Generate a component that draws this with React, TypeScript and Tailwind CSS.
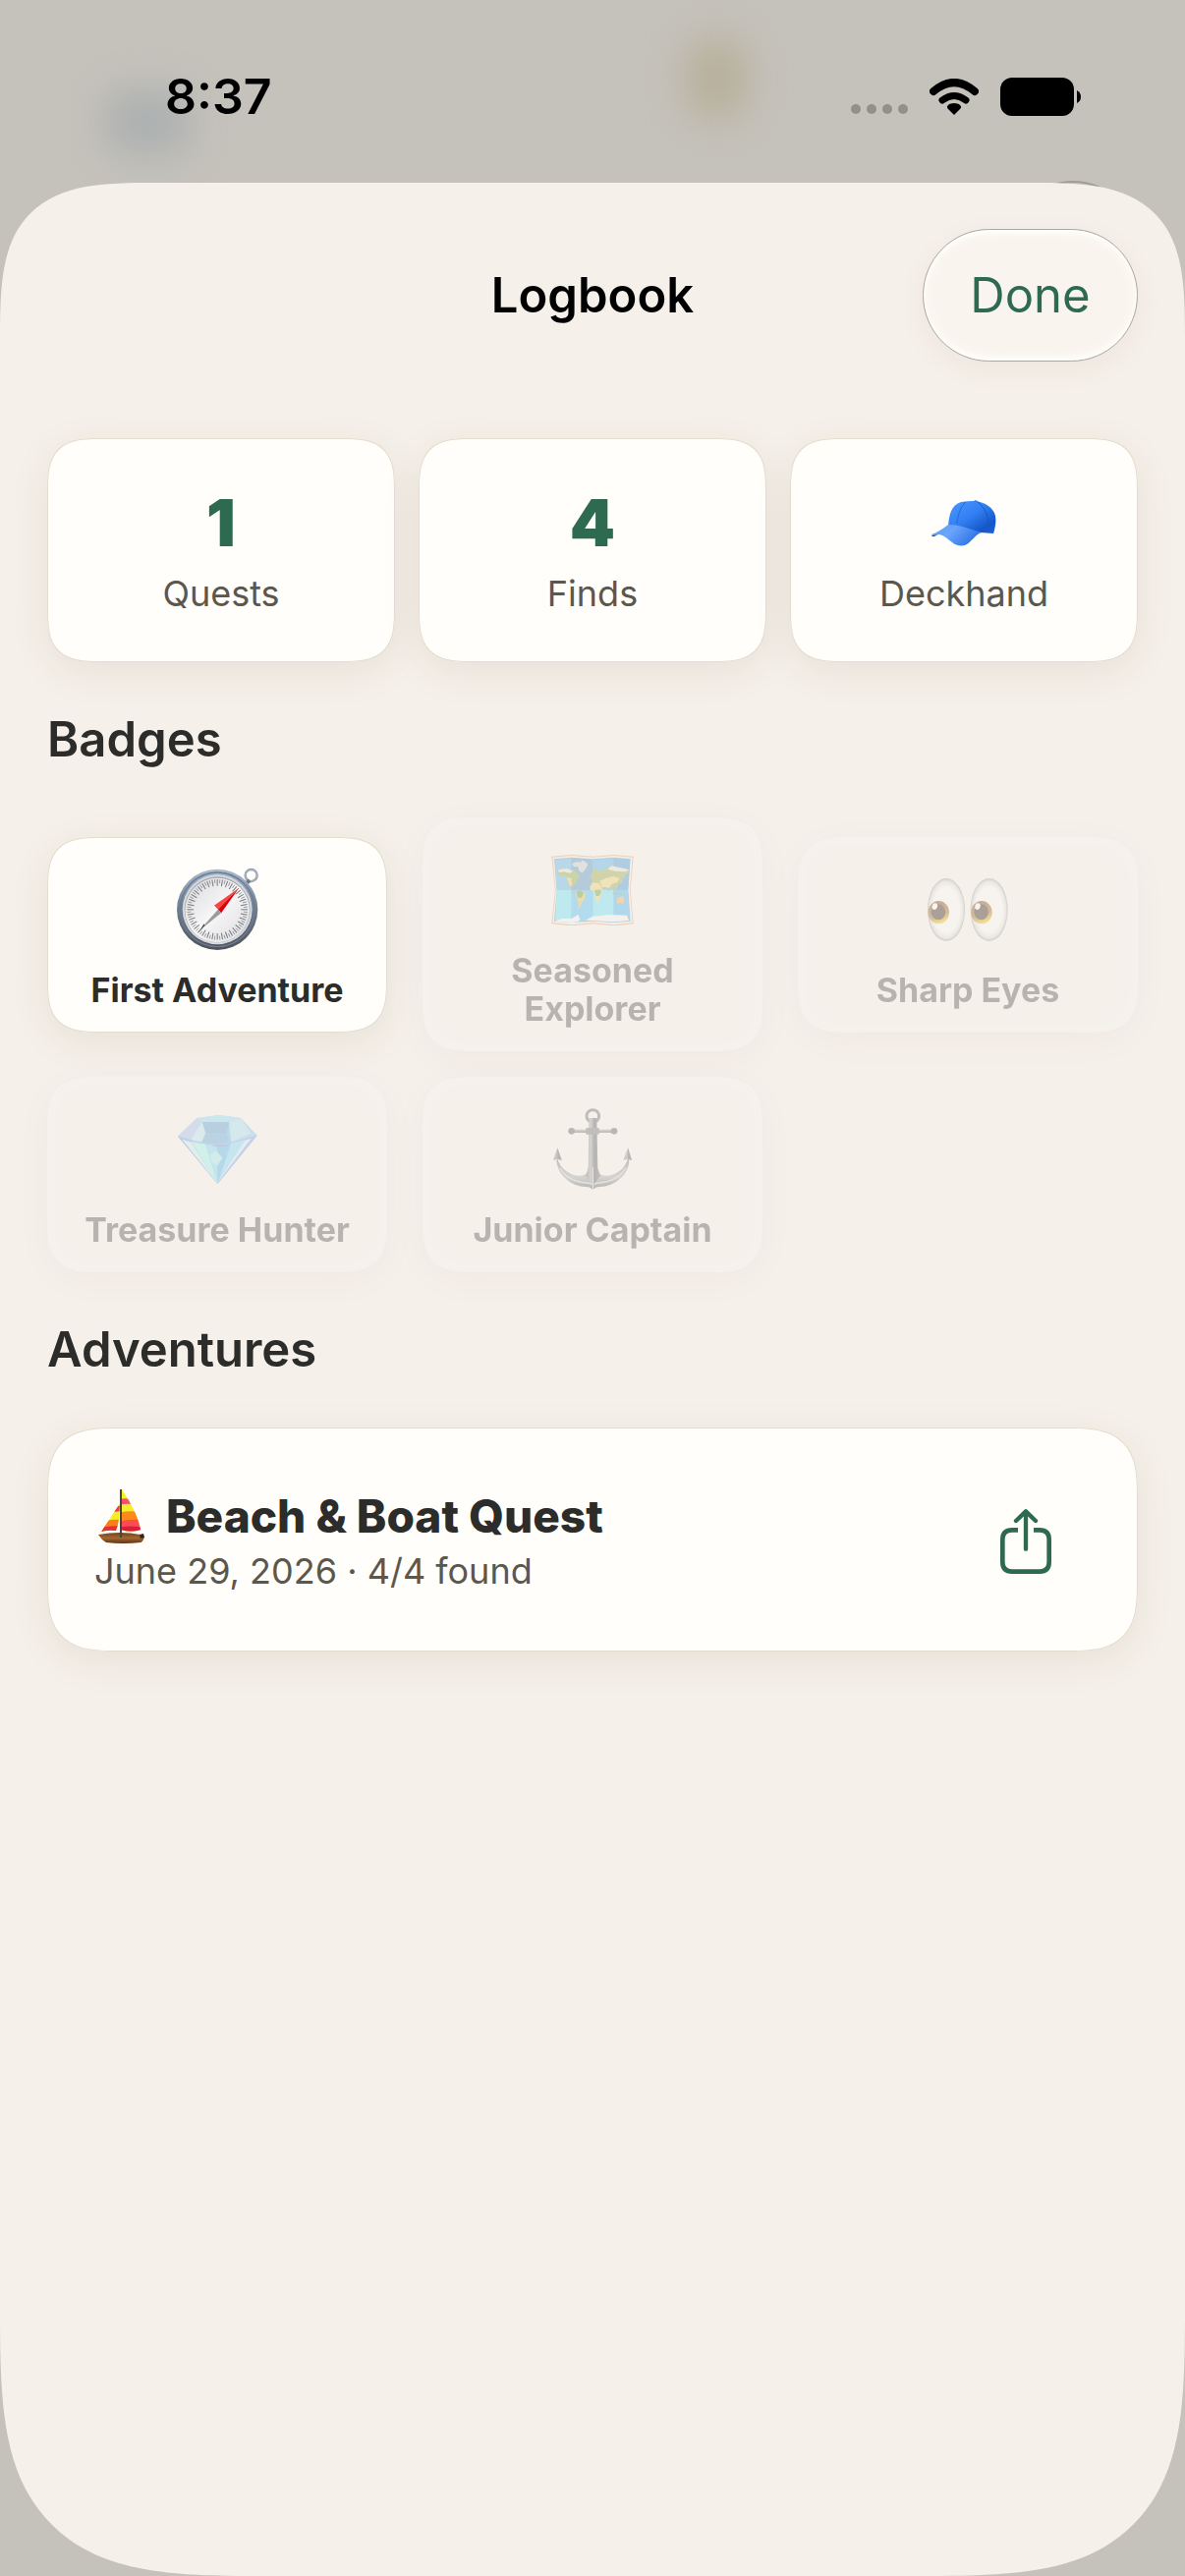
import { ReactNode } from 'react';

interface Badge {
  name: string;
  icon: ReactNode;
  earned: boolean;
}

const CapIcon = () => (
  <svg viewBox="0 0 66 47" className="w-[66px]" aria-hidden="true">
    <defs>
      <linearGradient id="capCrown" x1="0" y1="0" x2="1" y2="1">
        <stop offset="0" stopColor="#4a98ff" />
        <stop offset="0.45" stopColor="#3380f4" />
        <stop offset="0.8" stopColor="#1457c8" />
        <stop offset="1" stopColor="#1c62d8" />
      </linearGradient>
      <linearGradient id="capBrim" x1="0" y1="0" x2="1" y2="0.4">
        <stop offset="0" stopColor="#5a9bff" />
        <stop offset="0.45" stopColor="#6aa5fb" />
        <stop offset="1" stopColor="#2f74e6" />
      </linearGradient>
    </defs>
    <path d="M0 36c1 2 4 1 6-1l2-2z" fill="#154796" />
    <path d="M17 26C18 15 20 5 30 2c5-1 9-1 14-1 11 1 19 7 21 15 1 6 0 12-2 18l-13-1z" fill="url(#capCrown)" />
    <path d="M43 1c1-1 4-1 4 1z" fill="#2a6fe0" />
    <path d="M26 24c1-9 3-17 9-22" fill="none" stroke="#2468d6" strokeWidth="1" />
    <path d="M47 2c9 7 12 17 11 30" fill="none" stroke="#1a58c0" strokeWidth="1" />
    <path d="M0 35C6 33 12 29 17 25c12 0 20 4 34 8-7 2-10 10-17 13-5 1-10 0-13-3-4-3-8-7-13-8-3 0-6 2-8 0z" fill="url(#capBrim)" />
  </svg>
);

const CompassIcon = () => (
  <svg viewBox="0 0 248 252" className="w-[83px]" aria-hidden="true">
    <defs>
      <linearGradient id="compassRim" x1="0" y1="0" x2="0" y2="1">
        <stop offset="0" stopColor="#a9bdd2" />
        <stop offset="0.4" stopColor="#76859a" />
        <stop offset="1" stopColor="#4c525b" />
      </linearGradient>
      <linearGradient id="compassFace" x1="0" y1="0" x2="1" y2="1">
        <stop offset="0" stopColor="#d9d9dc" />
        <stop offset="0.5" stopColor="#f6f6f8" />
        <stop offset="1" stopColor="#dcdcdf" />
      </linearGradient>
    </defs>
    <circle cx="226" cy="24" r="18" fill="none" stroke="#8a98a9" strokeWidth="7" />
    <circle cx="226" cy="24" r="18" fill="none" stroke="#c3ccd6" strokeWidth="2" />
    <path d="M205 46l12-12 8 10-10 8z" fill="#6d7886" />
    <circle cx="123" cy="128" r="123" fill="url(#compassRim)" />
    <circle cx="123" cy="128" r="113" fill="none" stroke="#6e7c8f" strokeWidth="4" />
    <circle cx="123" cy="128" r="106" fill="#d6dade" />
    <circle cx="123" cy="128" r="100" fill="#a9a9ab" />
    <circle cx="123" cy="130" r="98" fill="url(#compassFace)" />
    {Array.from({ length: 72 }, (_, i) => (
      <line
        key={i}
        x1="123"
        y1="36"
        x2="123"
        y2={i % 2 ? 48 : 56}
        stroke="#77797d"
        strokeWidth={i % 2 ? 2 : 3}
        transform={`rotate(${i * 5} 123 128)`}
      />
    ))}
    <path d="M189 62L113 116l12 12z" fill="#ff4340" />
    <path d="M189 62l-64 66 10 10z" fill="#dc0009" />
    <path d="M68 192l45-76 12 12z" fill="#f7f7f7" />
    <path d="M68 192l57-64 10 10z" fill="#9b9b99" />
    <path d="M68 196l14-25 3 5z" fill="#4c4c4c" />
  </svg>
);

const MapIcon = () => (
  <svg viewBox="0 0 252 217" className="w-[84px]" aria-hidden="true">
    <path d="M1 5l61-5 65 5 64-5 60 5-9 103 9 103-60 6-64-6-65 6-61-6 11-103z" fill="#e0a070" />
    <path d="M4 8l58-5 65 5 64-5 57 5-8 100 8 100-57 6-64-6-65 6-58-6 10-100z" fill="#f5ebe2" />
    <path d="M9 13l53-5 65 5 64-5 51 5-7 95 7 95-51 4-64-4-65 4-53-4 8-95z" fill="#4fa0d8" />
    <path d="M12 15l50-4v97H17z" fill="#5fb2e6" />
    <path d="M62 11l65 4v93H62z" fill="#5796c4" />
    <path d="M127 15l64-4v97h-64z" fill="#54b0ea" />
    <path d="M191 11l49 5-6 92h-43z" fill="#4a9bd2" />
    <path d="M17 108h45v98l-50-4z" fill="#6edff7" />
    <path d="M62 108h65v93l-65 5z" fill="#50bcf2" />
    <path d="M127 108h64v97l-64-4z" fill="#6edff7" />
    <path d="M191 108h43l6 93-49 4z" fill="#4cb4f0" />
    <path d="M20 49l10-6 18 3 20 0 14 12 6 8-8 10-4 12-8 6-8 6 8 12 8 7-12-8-8-14-7-18-4-14-24-4z" fill="#8fa84a" />
    <path d="M46 68l16 4 2 20-6 6-6-14z" fill="#e8c660" />
    <path d="M22 46l26-4 18 8-8 6-20-4-15 3z" fill="#dfe0da" />
    <path d="M64 28l12-6 32 2 3 7-7 14-10 11-10-9-2-10-14-1z" fill="#c5cfd0" />
    <path d="M77 113l12-5 15 9-2 18-10 14-6 12-4 7 1-22-7-20z" fill="#e3c04c" />
    <path d="M77 113l12-5 10 9-6 14-12 0z" fill="#5b9a3c" />
    <path d="M119 64l8-14 10-8 12 8 20-8 12-8 20 4 36 8 1 10-10 2-4 14-8-2 2 14-12 3-4 14-6 10-6-12-9 2-6 13-6-14-12 4-7-10-10-8-14 2z" fill="#9cab4c" />
    <path d="M148 80l18-8 24-6 18 6-6 12-18 6-8 12-12-4-10 2z" fill="#ead174" />
    <path d="M172 44l12-10 20 4 34 8-12 6-30-2z" fill="#dfe0da" />
    <path d="M118 98l8-13 20 2 10 20 3 4-8 12-4 18-8 5-5-18-4-17-11-3z" fill="#edcf70" />
    <path d="M132 108l18-2 4 8-8 12h-10z" fill="#6da13f" />
    <path d="M186 114l10 3 8 6-12-3zM210 118l10 5-6 1z" fill="#6da13f" />
    <path d="M200 136l10-8 8-2 6 13-6 11-8-4-9 3z" fill="#f0a850" />
    <path d="M12 203l20-8 30 0 20-12 6 14-6 8-20 2zM105 200l22-12 30-2 14-3 60 2 6 16-46 4-64-4z" fill="#f4f2ee" />
    <path d="M90 18l8 1 8 4-10 2z" fill="#d7d9d6" />
  </svg>
);

const EyesIcon = () => (
  <svg viewBox="0 0 246 192" className="w-[82px]" aria-hidden="true">
    <defs>
      <radialGradient id="eyeWhite">
        <stop offset="0.7" stopColor="#fbfcf9" />
        <stop offset="0.9" stopColor="#dddeda" />
        <stop offset="1" stopColor="#9b9c99" />
      </radialGradient>
      <linearGradient id="eyeIris" x1="0.3" y1="0" x2="0.6" y2="1">
        <stop offset="0" stopColor="#80461c" />
        <stop offset="0.6" stopColor="#a86a22" />
        <stop offset="1" stopColor="#f4d21c" />
      </linearGradient>
    </defs>
    {[0, 131].map((x) => (
      <g key={x} transform={`translate(${x} 0)`}>
        <ellipse cx="57" cy="96" rx="57" ry="96" fill="url(#eyeWhite)" />
        <ellipse cx="34" cy="104" rx="32" ry="35" fill="url(#eyeIris)" />
        <ellipse cx="33" cy="103" rx="22" ry="24" fill="#3c2a1c" />
        <ellipse cx="22" cy="86" rx="8" ry="10" fill="#fff" transform="rotate(20 22 86)" />
      </g>
    ))}
  </svg>
);

const GemIcon = () => (
  <svg viewBox="0 0 242 209" className="w-[81px]" aria-hidden="true">
    <path d="M0 64L58 9l69-9 64 9 50 53-120 147z" fill="#62bcee" />
    <path d="M0 64L58 9l16 12-5 59z" fill="#a4bff0" />
    <path d="M58 9l69-9 64 9-35 12H74z" fill="#8edcf4" />
    <path d="M191 9l50 53-79 21-6-62z" fill="#8cc8ee" />
    <path d="M156 21l35-12 30 46-59 28z" fill="#a6e0f0" />
    <path d="M74 21h82l-8 34H84z" fill="#5f9fd0" />
    <path d="M84 55h64l8 29-36 6-48-7z" fill="#62a8da" />
    <path d="M74 21l10 34-12 28-32-8z" fill="#b6e2f2" />
    <path d="M0 64q60 22 72 19l49 126z" fill="#6a92dc" />
    <path d="M12 73l28 9 81 126z" fill="#c6ecf4" />
    <path d="M40 80l44 8 37 121z" fill="#9cf0ec" />
    <path d="M84 88l36 6 1 115z" fill="#7ed4ee" />
    <path d="M120 94l42-9-41 124z" fill="#56b6ee" />
    <path d="M162 85l48-12-89 136z" fill="#84d6f4" />
    <path d="M210 73l31-11-120 147z" fill="#7c9fe6" />
    <path d="M204 78l20-8-102 134z" fill="#d0e4f6" />
    <path d="M96 120l22-10 18 20-16 24-16-10z" fill="#a2e4ee" />
    <path d="M2 66q60 22 110 22t127-26" fill="none" stroke="#88a8ea" strokeWidth="3" />
    <path d="M108 93h42" stroke="#668fc0" strokeWidth="4" />
  </svg>
);

const AnchorIcon = () => (
  <svg viewBox="0 0 240 251" className="w-[80px]" aria-hidden="true">
    <defs>
      <linearGradient id="anchorShaft">
        <stop offset="0" stopColor="#6f7171" />
        <stop offset="0.35" stopColor="#a9abaa" />
        <stop offset="0.6" stopColor="#585a5b" />
        <stop offset="1" stopColor="#777979" />
      </linearGradient>
      <linearGradient id="anchorArm" x1="0" y1="0" x2="0" y2="1">
        <stop offset="0" stopColor="#747676" />
        <stop offset="0.6" stopColor="#a9abaa" />
        <stop offset="1" stopColor="#585a5b" />
      </linearGradient>
    </defs>
    <circle cx="121" cy="24" r="19" fill="none" stroke="#6f7171" strokeWidth="9" />
    <path d="M12 152c8 32 40 54 68 54 20 0 26-8 28-24h26c2 16 8 24 28 24 28 0 60-22 66-54l4 8c-2 46-46 80-90 80-9 0-15 3-21 9-6-6-12-9-21-9-44 0-86-34-90-80z" fill="url(#anchorArm)" />
    <path d="M20 182c18 34 54 44 84 46 8 0 12 2 17 5 5-3 9-5 17-5 34-2 66-16 84-46" fill="none" stroke="#d0d1ce" strokeWidth="4" />
    <path d="M109 30h24l3 152 8 24-23 30-22-30 8-24z" fill="url(#anchorShaft)" />
    <path d="M121 180v69" stroke="#dedfdd" strokeWidth="3" />
    <path d="M56 70h130" stroke="#7b7d7d" strokeWidth="10" />
    <path d="M64 68h115" stroke="#a3a5a4" strokeWidth="3" />
    <circle cx="56" cy="70" r="10" fill="#626464" />
    <circle cx="186" cy="70" r="10" fill="#626464" />
    <rect x="99" y="60" width="42" height="20" rx="5" fill="#747676" />
    <path d="M13 121L0 159l13-4 13 4z" fill="#8b8d8c" />
    <path d="M13 121v34l13 4z" fill="#626464" />
    <path d="M228 121l-14 38 14-4 12 4z" fill="#989a99" />
    <path d="M228 121v34l12 4z" fill="#626464" />
  </svg>
);

const BoatIcon = () => (
  <svg viewBox="0 0 47 55" className="w-[47px] shrink-0" aria-hidden="true">
    <defs>
      <clipPath id="mainSail">
        <path d="M24 0c8 12 16 26 19 41q-10 3-20 0z" />
      </clipPath>
      <clipPath id="jibSail">
        <path d="M22 14L21 30q-1 7-3 12-8-1-15 1 9-13 19-29z" />
      </clipPath>
      <linearGradient id="boatHull" x1="0" y1="0" x2="0" y2="1">
        <stop offset="0" stopColor="#6b4423" />
        <stop offset="0.5" stopColor="#a5652b" />
        <stop offset="1" stopColor="#5a3317" />
      </linearGradient>
    </defs>
    <g clipPath="url(#mainSail)">
      <rect width="47" height="55" fill="#f2f02a" />
      <path d="M20 11q6-3 12-1l4 5q-8-1-16 1z" fill="#f5506e" />
      <path d="M20 24q10-3 24-1v9H20z" fill="#ff8a1c" />
      <path d="M20 33q10-3 26-2v12H20z" fill="#ff4a50" />
      <path d="M20 39q12-3 26 0v6H20z" fill="#d81f3a" />
    </g>
    <g clipPath="url(#jibSail)">
      <rect width="30" height="55" fill="#f4ee22" />
      <path d="M14 19l10-3v6l-10 1z" fill="#ee3a44" />
      <path d="M0 33q12-3 24-2v8H0z" fill="#ff7c1a" />
      <path d="M0 39q12-2 24-2v8H0z" fill="#e2303c" />
    </g>
    <path d="M0 46q23-4 43 0l4 2q-1 5-4 6-18 2-35 0-5-3-8-8z" fill="url(#boatHull)" />
    <path d="M42 46l4-1 1 4-4 1z" fill="#33261c" />
    <path d="M23 0v49" stroke="#4a443c" strokeWidth="2" />
  </svg>
);

const ShareIcon = () => (
  <svg viewBox="0 0 156 198" className="w-[52px]" fill="none" stroke="#2d6a4f" strokeWidth="14" aria-hidden="true">
    <path d="M54 64H36Q7 64 7 93v69q0 29 29 29h84q29 0 29-29V93q0-29-29-29h-18" />
    <path d="M78 10v112M48 36L78 7l30 29" strokeWidth="13" strokeLinecap="round" strokeLinejoin="round" />
  </svg>
);

const StatusBar = () => (
  <div className="relative flex h-[186px] items-center justify-between pt-[10px] pr-[106px] pl-[168px] text-black">
    <span className="text-[50px] leading-none font-semibold">8:37</span>
    <div className="flex items-center gap-[22px]">
      <div className="flex gap-[6px] pt-[26px]">
        {[0, 1, 2, 3].map((dot) => (
          <span key={dot} className="size-[10px] rounded-full bg-[#93908a]" />
        ))}
      </div>
      <svg viewBox="0 0 50 37" className="w-[50px]" aria-hidden="true">
        <path d="M4 13Q25-5 46 13" fill="none" stroke="#000" strokeWidth="8" strokeLinecap="round" />
        <path d="M13 22q12-9 24 0" fill="none" stroke="#000" strokeWidth="7" strokeLinecap="round" />
        <path d="M25 37l-6-6c-3-3 1-6 6-6s9 3 6 6z" />
      </svg>
      <svg viewBox="0 0 82 39" className="w-[82px]" aria-hidden="true">
        <rect width="75" height="39" rx="12" />
        <path d="M78 13q4 2 4 6.500t-4 6.500z" />
      </svg>
    </div>
  </div>
);

const StatCard = ({ label, children }: { label: string; children: ReactNode }) => (
  <div className="flex flex-col items-center gap-3 rounded-[54px] bg-[#fffefa] py-12 shadow-[0_10px_40px_rgba(70,45,30,0.08)] inset-ring inset-ring-[#e4dccd] [corner-shape:superellipse(1.6)]">
    <div className="flex h-[76px] items-center text-[66px] font-black text-[#2d6a4f]">{children}</div>
    <div className="text-[36px] leading-[44px] text-[#5c574d]">{label}</div>
  </div>
);

const BadgeCard = ({ name, icon, earned }: Badge) => (
  <li
    className={`flex flex-col items-center gap-3 rounded-[54px] px-5 py-6 [corner-shape:superellipse(1.6)] ${
      earned
        ? 'bg-[#fffefa] shadow-[0_10px_40px_rgba(70,45,30,0.08)] inset-ring inset-ring-[#e4dccd]'
        : 'bg-[#f5f0ea] shadow-[0_8px_40px_rgba(70,45,30,0.03),inset_0_0_24px_rgba(255,255,255,0.22)]'
    }`}
  >
    <div className={`flex h-[100px] items-center ${earned ? '' : 'opacity-40'}`}>{icon}</div>
    <p className={`px-3 text-center text-[34px] leading-[39px] font-bold text-[#2c2c2a] ${earned ? '' : 'opacity-30'}`}>
      {name}
    </p>
  </li>
);

const badges: Badge[] = [
  { name: 'First Adventure', icon: <CompassIcon />, earned: true },
  { name: 'Seasoned Explorer', icon: <MapIcon />, earned: false },
  { name: 'Sharp Eyes', icon: <EyesIcon />, earned: false },
  { name: 'Treasure Hunter', icon: <GemIcon />, earned: false },
  { name: 'Junior Captain', icon: <AnchorIcon />, earned: false },
];

const App = () => {
  return (
    <div className="relative flex min-h-screen flex-col overflow-hidden bg-[#c5c2bb] font-['Inter',sans-serif]">
      {/* blurred screen behind the sheet */}
      <div className="absolute top-[92px] left-[108px] h-[64px] w-[84px] rounded-2xl bg-[#abafb0] blur-[20px]" />
      <div className="absolute top-[38px] left-[698px] h-[84px] w-[62px] rounded-full bg-[#b6ae98] blur-[20px]" />
      <div className="absolute top-[184px] right-[48px] size-[132px] rounded-full border-2 border-[#a19e98]" />

      <StatusBar />

      <main className="relative flex-1 rounded-t-[160px] rounded-b-[270px] bg-[#f5f0e9] px-12 [corner-shape:superellipse(1.68)]">
        <header className="grid grid-cols-[1fr_auto_1fr] items-center pt-[47px] pb-[78px]">
          <h1 className="col-start-2 text-[49px] leading-[62px] font-semibold text-black">Logbook</h1>
          <button
            type="button"
            className="h-[135px] w-[219px] justify-self-end rounded-full border border-[#aea89c] bg-[#f9f4ed] text-[49px] text-[#2d6a4f] shadow-[0_8px_30px_rgba(70,45,30,0.05),inset_0_4px_4px_#fffefa,inset_0_-4px_4px_#fffefa,inset_0_0_24px_rgba(255,254,250,0.7)]"
          >
            Done
          </button>
        </header>

        <div className="flex flex-col gap-12">
          <section className="grid grid-cols-3 gap-6">
            <StatCard label="Quests">1</StatCard>
            <StatCard label="Finds">4</StatCard>
            <StatCard label="Deckhand">
              <CapIcon />
            </StatCard>
          </section>

          <section className="flex flex-col gap-12">
            <h2 className="text-[49px] leading-[62px] font-semibold text-[#2c2c2a]">Badges</h2>
            <ul className="grid grid-cols-3 items-center gap-x-9 gap-y-[26px]">
              {badges.map((badge) => (
                <BadgeCard key={badge.name} {...badge} />
              ))}
            </ul>
          </section>

          <section className="flex flex-col gap-12">
            <h2 className="text-[49px] leading-[62px] font-semibold text-[#2c2c2a]">Adventures</h2>
            <article className="flex items-center justify-between rounded-[72px] bg-[#fffefa] p-12 shadow-[0_10px_40px_rgba(70,45,30,0.08)] inset-ring inset-ring-[#e4dccd] [corner-shape:superellipse(1.6)]">
              <div className="flex flex-col gap-1">
                <h3 className="flex items-center gap-[22px] pl-1 text-[46px] leading-[60px] font-extrabold text-[#2c2c2a]">
                  <BoatIcon />
                  Beach &amp; Boat Quest
                </h3>
                <p className="text-[36px] leading-[44px] text-[#5c574d]">June 29, 2026 · 4/4 found</p>
              </div>
              <button type="button" aria-label="Share adventure" className="flex size-[132px] items-center justify-center pt-1">
                <ShareIcon />
              </button>
            </article>
          </section>
        </div>
      </main>
    </div>
  );
};

export default App;
